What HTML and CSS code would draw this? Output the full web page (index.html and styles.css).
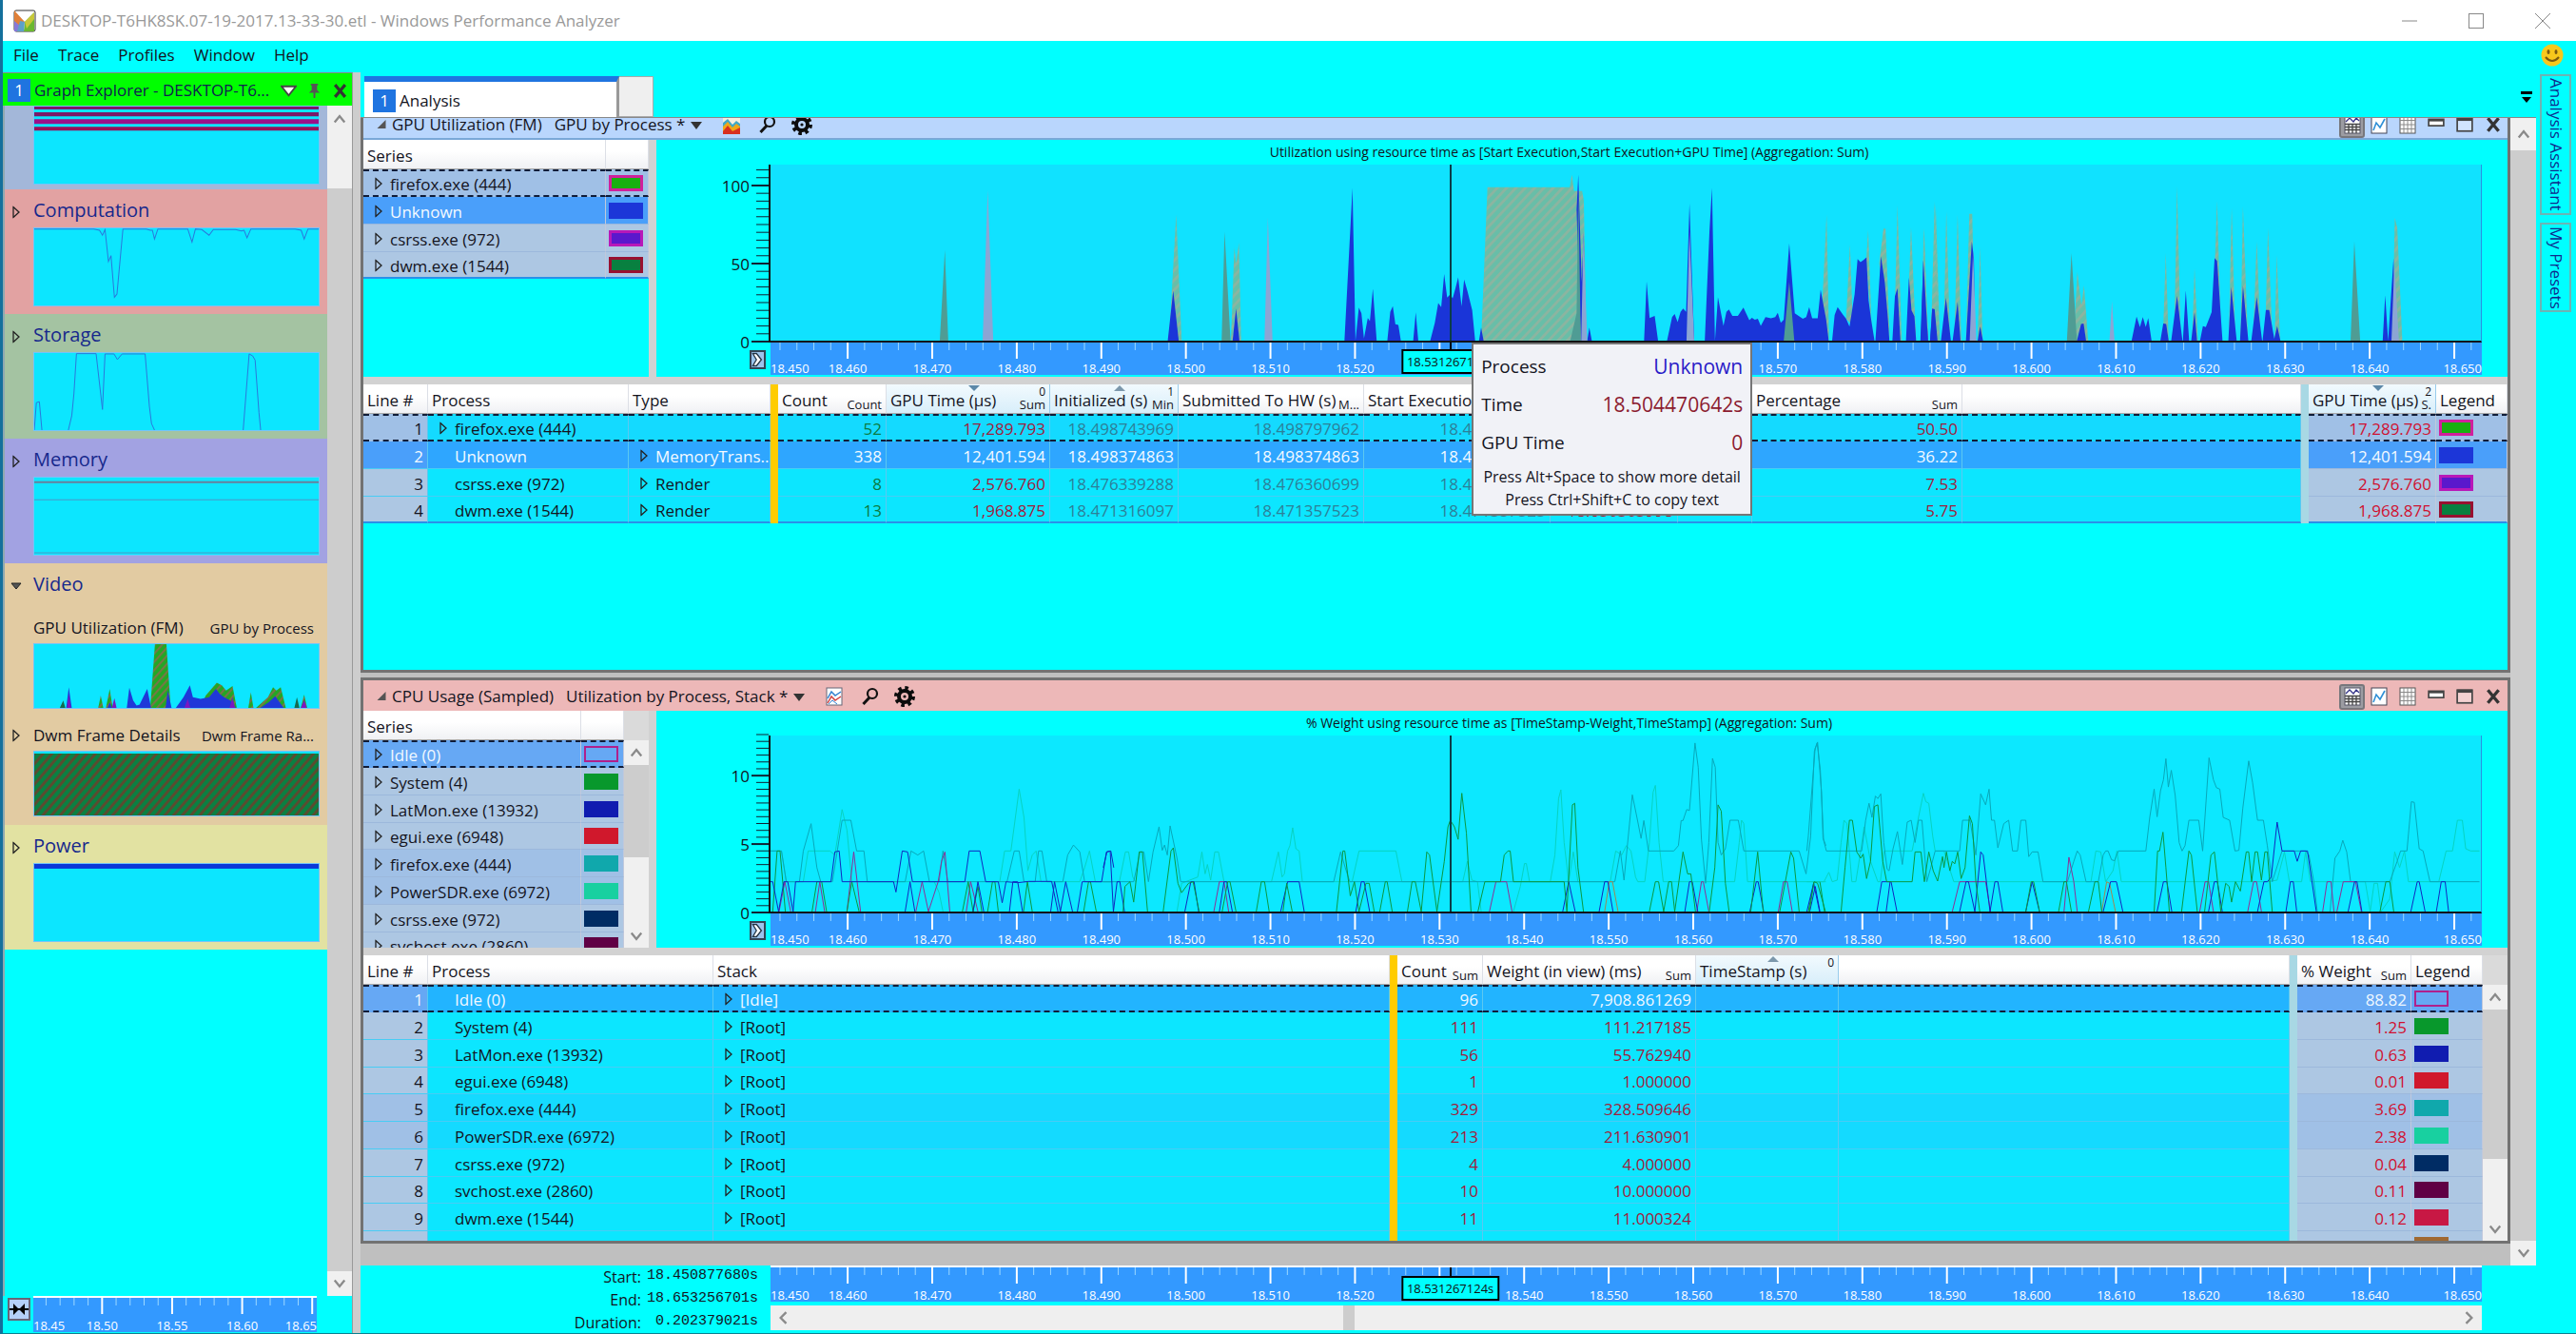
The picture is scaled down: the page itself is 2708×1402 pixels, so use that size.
FILE: index.html
```html
<!DOCTYPE html>
<html lang="en">
<head>
<meta charset="utf-8">
<title>DESKTOP-T6HK8SK.07-19-2017.13-33-30.etl - Windows Performance Analyzer</title>
<link rel="stylesheet" href="styles.css">
</head>
<body>
<svg class="defs" width="0" height="0" aria-hidden="true">
  <defs>
    <pattern id="hatch" width="18" height="18" patternUnits="userSpaceOnUse" patternTransform="rotate(35)"><rect width="18" height="18" fill="#68bea8"/><rect width="7" height="18" fill="#8cb4a0"/></pattern>
    <pattern id="hatchThumb" width="14" height="14" patternUnits="userSpaceOnUse" patternTransform="rotate(35)"><rect width="14" height="14" fill="#24a624"/><rect width="5" height="14" fill="#7a7448"/></pattern>
    <pattern id="hatchDwm" width="7" height="7" patternUnits="userSpaceOnUse" patternTransform="rotate(40)"><rect width="7" height="7" fill="#0a8042"/><rect width="3" height="7" fill="#5a4c30"/></pattern>
    <symbol id="tri" viewBox="0 0 8 13"><path d="M1 1V12L7 6.500Z" fill="none" stroke="#222" stroke-width="1.300"/></symbol>
    <symbol id="up" viewBox="0 0 12 12"><path d="M1.500 9L6 3.500 10.500 9" fill="none" stroke="#8a8a8a" stroke-width="2"/></symbol>
    <symbol id="down" viewBox="0 0 12 12"><path d="M1.500 3L6 8.500 10.500 3" fill="none" stroke="#8a8a8a" stroke-width="2"/></symbol>
    <symbol id="close" viewBox="0 0 16 16"><path d="M3 2L13 14M13 2L3 14" stroke="#333" stroke-width="3"/></symbol>
    <symbol id="find" viewBox="0 0 18 20"><circle cx="11" cy="7" r="5" fill="none" stroke="#111" stroke-width="2.200"/><path d="M8 11L1.500 18" stroke="#111" stroke-width="3"/></symbol>
    <symbol id="gear" viewBox="0 0 22 22"><circle cx="11" cy="11" r="6" fill="none" stroke="#0c0c0c" stroke-width="4"/><circle cx="11" cy="11" r="9" fill="none" stroke="#0c0c0c" stroke-width="4" stroke-dasharray="3.500 3.570"/><circle cx="11" cy="11" r="1.600" fill="#0c0c0c"/></symbol>
    <symbol id="both" viewBox="0 0 18 20"><rect x="1" y="1" width="16" height="18" fill="#fff" stroke="#556"/><path d="M2 7L6 3 10 7 13 3 16 6" fill="none" stroke="#338" stroke-width="1.300"/><path d="M1 9.500H17M1 12.500H17M1 15.500H17M5 9V19M9 9V19M13 9V19" stroke="#444" stroke-width="1.300"/></symbol>
    <symbol id="line" viewBox="0 0 18 20"><rect x="1" y="1" width="16" height="18" fill="#fff" stroke="#445"/><path d="M3 16L6 8 10 13 15 4" fill="none" stroke="#2e8fd6" stroke-width="1.600"/></symbol>
    <symbol id="grid" viewBox="0 0 18 20"><rect x="1" y="1" width="16" height="18" fill="#fff" stroke="#555"/><path d="M1 5.500H17M1 10H17M1 14.500H17M5 1V19M9 1V19M13 1V19" stroke="#8a8a8a"/></symbol>
    <symbol id="min" viewBox="0 0 16 16"><rect x="1" y="3" width="14" height="6" fill="#fff" stroke="#444" stroke-width="1.500"/><path d="M1 4H15" stroke="#444" stroke-width="2"/></symbol>
    <symbol id="max" viewBox="0 0 16 16"><rect x="1" y="2" width="14" height="12" fill="#fff" fill-opacity=".35" stroke="#444" stroke-width="1.500"/><path d="M1 3H15" stroke="#444" stroke-width="3"/></symbol>
    <symbol id="chev" viewBox="0 0 10 12"><path d="M1 1H4L8 6 4 11H1L4 6Z" fill="#fff" stroke="#234" stroke-width="1"/></symbol>
  </defs>
</svg>

<header class="titlebar">
  <svg class="app-icon" viewBox="0 0 24 24"><rect x="1" y="1" width="22" height="22" rx="2" fill="#fff" stroke="#333"/><path d="M1 4L7 10 12 23H1Z" fill="#8878d8"/><path d="M1 1L12 13 8 18 1 12Z" fill="#e08038"/><path d="M12 13L22 3V23H11Z" fill="#6cb830"/><path d="M12 13L22 3V10L14 20Z" fill="#c8c838"/><path d="M7 12L12 13 11 23H4Z" fill="#5ca0c8"/></svg>
  <h1>DESKTOP-T6HK8SK.07-19-2017.13-33-30.etl - Windows Performance Analyzer</h1>
  <div class="window-buttons">
    <button aria-label="Minimize"><svg viewBox="0 0 16 16"><path d="M0 8H16" stroke="#888"/></svg></button>
    <button aria-label="Maximize"><svg viewBox="0 0 16 16"><rect x=".5" y=".5" width="15" height="15" fill="none" stroke="#888"/></svg></button>
    <button aria-label="Close"><svg viewBox="0 0 16 16"><path d="M0 0L16 16M16 0L0 16" stroke="#888"/></svg></button>
  </div>
</header>

<nav class="menubar">
  <button>File</button><button>Trace</button><button>Profiles</button><button>Window</button><button>Help</button>
  <svg class="smiley" viewBox="0 0 24 24"><circle cx="12" cy="12" r="11.500" fill="#f8c81c"/><ellipse cx="8" cy="8.500" rx="1.500" ry="2.500" fill="#7a5a10"/><ellipse cx="16" cy="8.500" rx="1.500" ry="2.500" fill="#7a5a10"/><path d="M5 14Q12 22 19 14" fill="none" stroke="#7a5a10" stroke-width="2"/></svg>
</nav>

<div class="shell">
  <aside class="explorer">
    <div class="explorer-head">
      <span class="badge">1</span><h2>Graph Explorer - DESKTOP-T6...</h2>
      <button aria-label="Menu"><svg viewBox="0 0 18 16"><path d="M1 3H17L9 13Z" fill="#fff" stroke="#444" stroke-width="2"/></svg></button>
      <button aria-label="Pin"><svg viewBox="0 0 16 18"><path d="M4 1H12V3H11V8L14 11H9V17H7V11H2L5 8V3H4Z" fill="#555"/></svg></button>
      <button aria-label="Close"><svg viewBox="0 0 16 16"><use href="#close"/></svg></button>
    </div>
    <div class="explorer-body">
      <div class="sections">
        <section class="sec sec-system">
          <svg class="thumb" viewBox="0 0 298 80" preserveAspectRatio="none"><rect y="26" width="298" height="54" fill="#0ce6ff"/><path d="M0 0H298V3H0ZM0 6H298V10H0Z" fill="#7a1a68"/><path d="M0 13H298V18H0Z" fill="#9b1188"/><path d="M0 21H298V25H0Z" fill="#981058"/></svg>
        </section>
        <section class="sec sec-computation">
          <h3><button class="tw" aria-label="Expand"><svg viewBox="0 0 8 13"><use href="#tri"/></svg></button>Computation</h3>
          <svg class="thumb" viewBox="80 716 667 246" preserveAspectRatio="none"><path class="tl" d="M80 718H220L233 722 240 738 246 720 254 822 260 803 268 936 274 926 288 718H343L352 722 357 722 362 750 370 718H440L450 760 458 718 473 720 490 738 500 720 552 720 566 724 572 722 579 746 588 718H692L706 722 713 750 722 718H747"/></svg>
        </section>
        <section class="sec sec-storage">
          <h3><button class="tw" aria-label="Expand"><svg viewBox="0 0 8 13"><use href="#tri"/></svg></button>Storage</h3>
          <svg class="thumb" viewBox="80 1109 667 247" preserveAspectRatio="none"><path class="tl" d="M80 1356L85 1268 92 1265 98 1356M160 1356L168 1310 173 1240 179 1111H225L240 1290 246 1112H267L275 1130 286 1112H340L350 1280 355 1335 362 1356M570 1356L584 1112 592 1118 598 1132 607 1300 611 1356"/></svg>
        </section>
        <section class="sec sec-memory">
          <h3><button class="tw" aria-label="Expand"><svg viewBox="0 0 8 13"><use href="#tri"/></svg></button>Memory</h3>
          <svg class="thumb" viewBox="0 0 298 84" preserveAspectRatio="none"><path d="M0 5H298" stroke="#68809c" stroke-width="2"/><path d="M0 24H298M0 82H298" stroke="#4898c8" stroke-width="1"/></svg>
        </section>
        <section class="sec sec-video">
          <h3><button class="tw" aria-label="Collapse"><svg class="wide" viewBox="0 0 12 8"><path d="M1 1H11L6 7Z" fill="#555" stroke="#222"/></svg></button>Video</h3>
          <div class="graph-name"><span>GPU Utilization (FM)</span><span class="preset-name">GPU by Process</span></div>
          <svg class="thumb short" viewBox="80 607 667 190" preserveAspectRatio="none">
            <path fill="url(#hatchThumb)" d="M352 797L363 607H390L400 797ZM248 797L257 740 264 797ZM470 797L482 760 508 722 520 730 530 745 545 732 555 797ZM582 797L588 750 594 797ZM600 797L615 780 628 765 640 735 648 745 658 735 670 797ZM705 797L713 757 720 797ZM230 797L236 760 242 797Z"/>
            <path fill="#146b50" d="M140 797L148 775 153 797ZM690 797L696 765 702 797Z"/>
            <path fill="#1f38d8" d="M155 797L161 735 168 797ZM297 797L303 737 312 775 320 790 327 787 345 740 354 797ZM388 797L393 745 402 797ZM412 797L430 765 445 730 452 765 470 770 490 765 506 740 515 755 525 765 540 775 553 797ZM610 797L630 780 645 762 665 797ZM252 797L257 780 262 797Z"/>
            <path fill="#7a18c0" d="M157 797L161 755 166 797ZM262 797L268 768 273 797ZM432 797L440 770 446 797ZM538 797L545 765 551 797ZM705 797L713 772 719 797Z"/>
          </svg>
          <div class="graph-name"><button class="tw" aria-label="Expand"><svg viewBox="0 0 8 13"><use href="#tri"/></svg></button><span>Dwm Frame Details</span><span class="preset-name">Dwm Frame Ra...</span></div>
          <svg class="thumb short" viewBox="0 0 298 68" preserveAspectRatio="none"><rect y="2" width="298" height="66" fill="url(#hatchDwm)"/></svg>
        </section>
        <section class="sec sec-power">
          <h3><button class="tw" aria-label="Expand"><svg viewBox="0 0 8 13"><use href="#tri"/></svg></button>Power</h3>
          <svg class="thumb" viewBox="0 0 298 82" preserveAspectRatio="none"><rect width="298" height="5" fill="#0c38d8"/></svg>
        </section>
      </div>
      <div class="scroll"><button class="thumb-up tall" aria-label="Scroll up"><svg viewBox="0 0 12 12"><use href="#up"/></svg></button><button aria-label="Scroll down"><svg viewBox="0 0 12 12"><use href="#down"/></svg></button></div>
    </div>
    <div class="explorer-foot">
      <button class="fit" aria-label="Fit"><svg viewBox="0 0 20 18"><path d="M0 9H20" stroke="#000" stroke-width="2"/><path d="M4 3L10 9 4 15ZM16 3L10 9 16 15Z" fill="#000"/></svg></button>
      <div class="ruler framed" data-step="0.05" data-minor="0.01" data-digits="2"></div>
    </div>
  </aside>
  <div class="main-split"></div>

  <main class="workspace">
    <div class="tabs">
      <button class="tab"><span class="badge">1</span>Analysis</button><button class="tab-new" aria-label="New tab"></button>
      <button class="tab-menu" aria-label="Tab list"><svg viewBox="0 0 12 12"><path d="M0 1.500H12" stroke="#000" stroke-width="3"/><path d="M1 6H11L6 12Z"/></svg></button>
    </div>
    <div class="work">
      <div class="panels">

        <section class="panel panel-gpu">
          <header class="panel-head">
            <svg class="corner" viewBox="0 0 10 10"><path d="M9 0V9H0Z" fill="#555"/></svg>
            <h2>GPU Utilization (FM)</h2>
            <button class="preset">GPU by Process * <svg viewBox="0 0 12 9"><path d="M0 1H12L6 9Z" fill="#333"/></svg></button>
            <button class="tool" aria-label="Graph type"><svg viewBox="0 0 18 20"><rect width="18" height="20" fill="#f4f0e0"/><path d="M0 8L5 4 10 10 14 6 18 9V20H0Z" fill="#3fa8c8"/><path d="M0 12L5 7 10 13 14 9 18 12V20H0Z" fill="#f0a818"/><path d="M0 17L5 11 10 17 18 13V20H0Z" fill="#d83020"/></svg></button>
            <button class="tool" aria-label="Search"><svg viewBox="0 0 18 20"><use href="#find"/></svg></button>
            <button class="tool gear" aria-label="Settings"><svg viewBox="0 0 22 22"><use href="#gear"/></svg></button>
            <span class="spacer"></span>
            <button class="view on" aria-label="Graph and table"><svg viewBox="0 0 18 20"><use href="#both"/></svg></button><button class="view" aria-label="Graph only"><svg viewBox="0 0 18 20"><use href="#line"/></svg></button><button class="view" aria-label="Table only"><svg viewBox="0 0 18 20"><use href="#grid"/></svg></button><button class="view" aria-label="Minimize"><svg viewBox="0 0 16 16"><use href="#min"/></svg></button><button class="view" aria-label="Maximize"><svg viewBox="0 0 16 16"><use href="#max"/></svg></button><button class="view" aria-label="Close"><svg viewBox="0 0 16 16"><use href="#close"/></svg></button>
          </header>
          <div class="chart-area">
            <div class="series">
              <table class="grid side">
                <colgroup><col><col class="w45"></colgroup>
                <thead><tr><th>Series</th><th></th></tr></thead>
                <tbody>
                  <tr class="focus hot"><td><svg class="exp" viewBox="0 0 8 13"><use href="#tri"/></svg>firefox.exe (444)</td><td><i class="sw c-ff"></i></td></tr>
                  <tr class="sel"><td><svg class="exp" viewBox="0 0 8 13"><use href="#tri"/></svg>Unknown</td><td><i class="sw c-unk"></i></td></tr>
                  <tr><td><svg class="exp" viewBox="0 0 8 13"><use href="#tri"/></svg>csrss.exe (972)</td><td><i class="sw c-csr"></i></td></tr>
                  <tr class="last"><td><svg class="exp" viewBox="0 0 8 13"><use href="#tri"/></svg>dwm.exe (1544)</td><td><i class="sw c-dwm"></i></td></tr>
                </tbody>
              </table>
            </div>
            <div class="v-split"></div>
            <div class="chart">
              <div class="chart-title">Utilization using resource time as [Start Execution,Start Execution+GPU Time] (Aggregation: Sum)</div>
              <div class="axis" data-max="114" data-minor="5" data-major="50"></div>
              <div class="plot gpu">
                <svg viewBox="0 0 1799 187" preserveAspectRatio="none">
                  <g transform="translate(-130 -62) scale(.44643 .33333)">
                    <path class="tealf" d="M690 748L702 458 710 748ZM1354 748L1361 400 1375 748Z"/>
                    <path class="pinkf" d="M791 748L803 268 816 748ZM1455 748L1463 355 1474 748Z"/>
                    <path class="hatchf" d="M1230 748L1247 345 1260 748ZM1376 748L1384 450 1388 500 1395 435 1400 748Z"/>
                    <path class="bluef" d="M1227 748L1240 588 1253 748ZM1380 748L1388 645 1396 748Z"/>
                  </g>
                  <g transform="translate(530 -62) scale(.44643 .33333)">
                    <path class="hatchf" d="M487 748L502 258H696L701 218 706 270H725L729 300 735 748ZM1290 650L1301 345 1307 748ZM1347 677L1356 440 1363 700ZM1394 500L1399 395 1407 700ZM1425 500L1435 390H1440L1450 748ZM1460 748L1468 315 1478 748ZM1490 748L1500 385 1512 748ZM1524 748L1530 390 1541 748ZM1548 748L1558 310 1568 748Z"/>
                    <path class="bluef" d="M165 748L184 260 191 748 199 642 205 660 211 740 220 675 225 685 232 582 241 748ZM266 748L273 655 279 637 285 695 292 697 298 748ZM327 748L333 657 339 748ZM367 748L378 690 386 627 393 640 400 535 407 610 414 600 420 612 427 578 433 545 441 638 447 552 455 590 466 650 473 748ZM482 748L487 705 493 748ZM712 330L716 218 724 560 729 400 731 748 722 748ZM737 748L742 705 748 748ZM871 748L877 558 884 675 896 668 904 748ZM925 748L937 672 943 662 950 688 957 655 963 645 970 655 978 310 989 748ZM1014 748L1025 400 1031 260 1038 748 1045 608 1058 700 1065 655 1071 648 1079 668H1092L1105 642 1119 682 1125 674 1132 680 1139 677 1146 700 1157 672 1170 676 1180 672 1186 658 1193 690 1200 680 1213 438 1226 660 1245 677 1253 672 1260 640 1267 676H1280L1287 585 1300 680 1306 748ZM1314 748L1320 665 1327 640 1340 665 1347 677 1355 702 1367 600 1374 487 1381 497 1388 490 1395 482 1400 620 1406 680 1414 748ZM1416 748L1429 478 1438 560 1445 670 1449 748ZM1456 748L1462 605 1468 580 1475 748ZM1488 748L1495 545 1501 650 1508 670 1512 748ZM1522 748L1529 490 1540 748ZM1545 748L1550 645 1556 650 1562 748Z"/>
                    <path class="tealf" d="M697 748L712 660 716 270 722 748ZM1200 748L1213 560 1225 748Z"/>
                    <path class="pinkf" d="M723 748L728 400 737 748ZM971 748L978 400 989 748Z"/>
                  </g>
                  <g transform="translate(1210 -172) scale(.43878 .35714)">
                    <path class="hatchf" d="M2 1006L8 670 16 1006ZM24 1006L33 590 42 1006ZM54 1006L61 620 70 1006ZM80 1006L88 630 97 1006ZM108 1006L116 628H123L130 1006ZM136 1006L142 725 148 1006ZM366 1006L375 800 385 900 391 840 401 1006ZM580 1006L587 745 594 1006ZM607 1006L614 545 623 1006ZM650 1006L656 790 664 1006ZM698 1006L710 590 720 1006ZM738 1006L745 610 754 1006ZM766 1006L772 605 784 1006ZM796 1006L805 710 815 1006ZM825 1006L832 670 843 1006ZM848 1006L853 750 861 1006ZM1130 1006L1136 640 1142 670 1154 1006Z"/>
                    <path class="tealf" d="M350 1006L361 745 374 1006ZM1030 1006L1039 710 1053 1006Z"/>
                    <path class="bluef" d="M0 1006L6 768 17 1006ZM22 1006L27 910 33 912 40 1006ZM48 1006L60 878 72 1006ZM76 1006L88 890 95 1006ZM108 1006L122 710 127 760 130 1006ZM136 1006L142 963 149 1006ZM374 1006L384 956 390 954 396 1006ZM505 1006L517 934 525 965 532 935 539 965 545 938 553 1006ZM574 1006L581 954 588 956 594 1006ZM600 1006L614 872 627 1006ZM628 1006L635 856 643 1006ZM648 1006L656 920 662 1006ZM669 1006L676 962 683 965 697 920 704 760 710 768 723 1006ZM737 1006L744 846 757 1006ZM765 1006L772 842 785 1006ZM792 1006L805 876 818 1006ZM819 1006L827 914H835L848 1006ZM846 1006L854 962 862 1006ZM1107 1006L1113 870 1120 1006 1133 760 1137 1006Z"/>
                    <path class="pinkf" d="M117 1006L125 740 133 1006ZM452 1006L458 888 464 1006ZM1128 1006L1135 780 1146 1006Z"/>
                  </g>
                </svg>
                <div class="cursor"></div>
                <div class="tooltip" role="tooltip">
                  <dl><dt>Process</dt><dd class="t-blue">Unknown</dd><dt>Time</dt><dd>18.504470642s</dd><dt>GPU Time</dt><dd>0</dd></dl>
                  <p>Press Alt+Space to show more detail</p><p>Press Ctrl+Shift+C to copy text</p>
                </div>
              </div>
              <button class="chevron" aria-label="Expand axis"><svg viewBox="0 0 10 12"><use href="#chev"/></svg></button>
              <div class="ruler" data-step="0.01" data-minor="0.002" data-digits="3" data-cursor="1"></div>
            </div>
          </div>
          <div class="h-split"></div>
          <div class="table-area">
            <table class="grid gpu-table">
              <colgroup><col class="w68"><col class="w211"><col class="w149"><col class="w8"><col class="w114"><col class="w172"><col class="w135"><col class="w195"><col class="w196"><col class="w134"><col class="w78"><col class="w221"><col><col class="w8"><col class="w134"><col class="w75"></colgroup>
              <thead><tr><th>Line #</th><th>Process</th><th>Type</th><th class="gold"></th><th><div>Count<sub>Count</sub></div></th><th class="sort desc"><div>GPU Time (µs)<sub>Sum</sub><sup>0</sup></div></th><th class="sort asc"><div>Initialized (s)<sub>Min</sub><sup>1</sup></div></th><th><div>Submitted To HW (s)<sub>M...</sub></div></th><th><div>Start Execution (s)<sub>Min</sub></div></th><th></th><th></th><th><div>Percentage<sub>Sum</sub></div></th><th></th><th class="freeze"></th><th class="sort desc"><div>GPU Time (µs)<sub>S.</sub><sup>2</sup></div></th><th>Legend</th></tr></thead>
              <tbody>
                <tr class="focus hot"><td class="n">1</td><td><svg class="exp" viewBox="0 0 8 13"><use href="#tri"/></svg>firefox.exe (444)</td><td></td><td class="gold"></td><td class="num g">52</td><td class="num r">17,289.793</td><td class="num s">18.498743969</td><td class="num s">18.498797962</td><td class="num s">18.498797962</td><td></td><td></td><td class="num r">50.50</td><td></td><td class="freeze"></td><td class="num k">17,289.793</td><td class="k"><i class="sw c-ff"></i></td></tr>
                <tr class="sel"><td class="n">2</td><td class="leaf">Unknown</td><td><svg class="exp" viewBox="0 0 8 13"><use href="#tri"/></svg>MemoryTrans...</td><td class="gold"></td><td class="num g">338</td><td class="num r">12,401.594</td><td class="num s">18.498374863</td><td class="num s">18.498374863</td><td class="num s">18.498374863</td><td></td><td></td><td class="num r">36.22</td><td></td><td class="freeze"></td><td class="num k">12,401.594</td><td class="k"><i class="sw c-unk"></i></td></tr>
                <tr><td class="n">3</td><td class="leaf">csrss.exe (972)</td><td><svg class="exp" viewBox="0 0 8 13"><use href="#tri"/></svg>Render</td><td class="gold"></td><td class="num g">8</td><td class="num r">2,576.760</td><td class="num s">18.476339288</td><td class="num s">18.476360699</td><td class="num s">18.476360699</td><td></td><td></td><td class="num r">7.53</td><td></td><td class="freeze"></td><td class="num k">2,576.760</td><td class="k"><i class="sw c-csr"></i></td></tr>
                <tr class="last"><td class="n">4</td><td class="leaf">dwm.exe (1544)</td><td><svg class="exp" viewBox="0 0 8 13"><use href="#tri"/></svg>Render</td><td class="gold"></td><td class="num g">13</td><td class="num r">1,968.875</td><td class="num s">18.471316097</td><td class="num s">18.471357523</td><td class="num s">18.471357523</td><td class="num r">18.650303998</td><td></td><td class="num r">5.75</td><td></td><td class="freeze"></td><td class="num k">1,968.875</td><td class="k"><i class="sw c-dwm"></i></td></tr>
              </tbody>
            </table>
          </div>
        </section>

        <section class="panel panel-cpu">
          <header class="panel-head">
            <svg class="corner" viewBox="0 0 10 10"><path d="M9 0V9H0Z" fill="#555"/></svg>
            <h2>CPU Usage (Sampled)</h2>
            <button class="preset">Utilization by Process, Stack * <svg viewBox="0 0 12 9"><path d="M0 1H12L6 9Z" fill="#333"/></svg></button>
            <button class="tool" aria-label="Graph type"><svg viewBox="0 0 18 20"><rect x="1" y="1" width="16" height="18" fill="#fff" stroke="#667"/><path d="M2 12L6 5 10 9 16 5" fill="none" stroke="#3080d0" stroke-width="1.500"/><path d="M2 17L6 10 10 14 16 10" fill="none" stroke="#d04040" stroke-width="1.500"/><path d="M3 18L7 14 12 18" fill="none" stroke="#3080d0"/></svg></button>
            <button class="tool" aria-label="Search"><svg viewBox="0 0 18 20"><use href="#find"/></svg></button>
            <button class="tool gear" aria-label="Settings"><svg viewBox="0 0 22 22"><use href="#gear"/></svg></button>
            <span class="spacer"></span>
            <button class="view on" aria-label="Graph and table"><svg viewBox="0 0 18 20"><use href="#both"/></svg></button><button class="view" aria-label="Graph only"><svg viewBox="0 0 18 20"><use href="#line"/></svg></button><button class="view" aria-label="Table only"><svg viewBox="0 0 18 20"><use href="#grid"/></svg></button><button class="view" aria-label="Minimize"><svg viewBox="0 0 16 16"><use href="#min"/></svg></button><button class="view" aria-label="Maximize"><svg viewBox="0 0 16 16"><use href="#max"/></svg></button><button class="view" aria-label="Close"><svg viewBox="0 0 16 16"><use href="#close"/></svg></button>
          </header>
          <div class="chart-area">
            <div class="series">
              <table class="grid side">
                <colgroup><col><col class="w45"></colgroup>
                <thead><tr><th>Series</th><th></th></tr></thead>
                <tbody>
                  <tr class="focus idle"><td><svg class="exp" viewBox="0 0 8 13"><use href="#tri"/></svg>Idle (0)</td><td><i class="sw c-idle"></i></td></tr>
                  <tr><td><svg class="exp" viewBox="0 0 8 13"><use href="#tri"/></svg>System (4)</td><td><i class="sw c-sys"></i></td></tr>
                  <tr><td><svg class="exp" viewBox="0 0 8 13"><use href="#tri"/></svg>LatMon.exe (13932)</td><td><i class="sw c-lat"></i></td></tr>
                  <tr><td><svg class="exp" viewBox="0 0 8 13"><use href="#tri"/></svg>egui.exe (6948)</td><td><i class="sw c-egui"></i></td></tr>
                  <tr class="hot"><td><svg class="exp" viewBox="0 0 8 13"><use href="#tri"/></svg>firefox.exe (444)</td><td><i class="sw c-teal"></i></td></tr>
                  <tr class="hot"><td><svg class="exp" viewBox="0 0 8 13"><use href="#tri"/></svg>PowerSDR.exe (6972)</td><td><i class="sw c-mint"></i></td></tr>
                  <tr><td><svg class="exp" viewBox="0 0 8 13"><use href="#tri"/></svg>csrss.exe (972)</td><td><i class="sw c-navy"></i></td></tr>
                  <tr><td><svg class="exp" viewBox="0 0 8 13"><use href="#tri"/></svg>svchost.exe (2860)</td><td><i class="sw c-plum"></i></td></tr>
                </tbody>
              </table>
              <div class="scroll"><span class="gap"></span><button aria-label="Scroll up"><svg viewBox="0 0 12 12"><use href="#up"/></svg></button><button class="thumb-down mid" aria-label="Scroll down"><svg viewBox="0 0 12 12"><use href="#down"/></svg></button></div>
            </div>
            <div class="v-split"></div>
            <div class="chart">
              <div class="chart-title">% Weight using resource time as [TimeStamp-Weight,TimeStamp] (Aggregation: Sum)</div>
              <div class="axis" data-max="13" data-minor="0.5" data-major="5"></div>
              <div class="plot cpu">
                <svg viewBox="0 0 1799 187" preserveAspectRatio="none">
                  <g transform="translate(-440 -73) scale(.5102 .33333)">
                    <path class="l-mint" d="M862 587H885L895 685H930L940 587H985L995 600 1010 455 1020 520 1030 685H1200L1210 720 1218 780M1320 685H1335L1345 587H1358L1375 390 1385 480 1393 650 1402 600 1410 587 1420 685H1500L1510 640 1520 587 1532 685H1568"/>
                    <path class="l-teal" d="M862 587H885L895 685H922L930 587 946 500 958 640 966 685H990L1010 489H1028L1040 587H1055L1062 685H1140L1152 587 1166 600 1178 587 1190 685H1210L1218 587 1228 685H1350L1365 587H1375L1385 685H1408L1415 587H1422L1432 685H1465L1475 600 1487 568 1500 590 1510 685H1568"/>
                    <path class="l-mag" d="M880 780L892 685 904 780M955 780L964 685 974 780M1020 780L1034 590 1048 780M1162 780L1175 685 1188 780 1208 685 1215 620 1222 590 1232 780M1266 780L1275 685 1290 780"/>
                    <path class="l-green" d="M867 780L876 587H882L893 780M948 780L958 685H968L978 780M1020 780L1030 685 1045 780M1258 780L1270 685 1280 780 1290 700 1298 780M1310 780L1320 685H1325L1332 780M1384 780L1392 685 1402 780M1508 780L1518 685H1522L1534 780"/>
                    <path class="l-blue" d="M862 685H867L879 780 890 685H898L909 780 914 685H987L995 590 1004 587 1010 685H1116L1121 718 1134 587 1145 590 1155 685H1263L1272 587H1294L1306 685H1332L1340 752 1348 685 1372 688 1395 684H1442L1455 780M1140 780L1150 685 1160 780M1280 780L1290 685 1302 780M1355 780L1362 685H1372L1382 780M1440 780L1448 685 1460 780 1471 685 1485 780M1495 780L1505 685H1545L1555 590 1564 587 1570 640"/>
                  </g>
                  <g transform="translate(350 -73) scale(.48473 .33333)">
                    <path class="l-mint" d="M35 685L48 590H55L64 670 70 685M160 780L170 690 205 670 214 590 221 660 226 630 233 680 242 590H250L262 685H365L380 590 388 670 393 660 400 587 405 570 411 513 418 580 425 587 432 685H540L555 587H635L648 685H780L790 620 800 680 812 685 820 780M890 780L905 700 914 627H918L925 685H970L980 600 988 420 993 392 1000 560 1010 685 1020 590 1030 685H1100L1112 587 1125 600 1135 570 1145 587 1155 670 1160 685H1175L1185 560 1193 400 1198 378 1206 560 1215 685H1370L1380 560 1385 489 1390 500 1398 685H1568"/>
                    <path class="l-teal" d="M0 685H66L80 590H88L98 685 108 590 121 510 128 585 133 568 139 600 145 507 160 610 168 685H500L515 590 525 640 535 685H1110L1122 587 1130 680 1148 408 1158 480 1167 547 1173 490 1183 587H1238L1248 570 1254 490H1258L1266 455 1272 458 1284 243 1291 320 1298 550 1307 690 1314 560 1322 292 1328 320 1334 560 1341 600 1350 580 1360 489H1378L1390 587H1510L1525 660 1535 540 1543 270 1549 243 1556 330 1563 550 1568 570"/>
                    <path class="l-org" d="M1088 780L1098 685H1105L1117 780"/>
                    <path class="l-mag" d="M240 780L252 685H262L272 780M838 780L852 685H875L887 780M1288 780L1298 685H1302L1314 780M1465 780L1476 685H1484L1495 780"/>
                    <path class="l-blue" d="M0 640L8 590 15 587 22 780 30 685H36L46 780M177 780L190 685H197L207 780M252 780L262 685H268L280 780M385 780L400 685H425L436 780M548 780L560 685H566L578 780M997 780L1010 685 1024 780M1076 780L1088 685H1095L1106 780M1262 780L1272 685H1278L1290 780M1403 780L1417 685H1421L1433 780M1533 780L1545 700 1555 780"/>
                    <path class="l-green" d="M43 780L47 700 58 685 66 750 78 590H85L96 780M130 780L147 587 152 577 162 690 170 720 185 690 195 685 208 780M258 780L270 685H275L288 780M332 780L343 685H350L360 780M390 780L398 690 410 780M506 780L520 587H524L536 730 545 685 555 780 570 690H577L588 780M600 780L612 685H616L627 780M660 780L670 685H677L690 780 702 590 708 600 724 780 740 620 748 510 753 489 762 510 770 550 778 403 788 530 798 780M813 780L828 685H862L870 600 878 587H883L890 685H1000L1006 780 1018 440 1023 435 1030 640 1042 780M1185 780L1198 685H1205L1216 780 1227 685H1233L1240 780 1258 590 1268 660H1275L1285 780M1315 780L1327 640 1334 440 1341 460 1350 690 1358 780M1405 780L1420 590 1432 780M1468 780L1492 590 1498 610 1510 780M1530 780L1542 685H1555L1565 780"/>
                  </g>
                  <g transform="translate(1090 -73) scale(.5153 .33333)">
                    <path class="l-mint" d="M0 685H35L45 655 52 685 62 680 70 560 76 489 82 500 92 685H100L110 587 117 510 130 620 145 685H150L158 587H215L228 480 238 403 243 430 249 435 257 540 262 587H280L300 685H580L590 587 600 590 610 685 625 650 633 587 642 685H940L960 680 975 590 985 685H1010L1018 590 1028 685H1140L1150 780 1158 690H1165L1172 780 1190 740 1200 590 1210 640 1220 587 1228 685H1290L1305 587H1318L1328 489H1338L1345 580 1355 587H1373"/>
                    <path class="l-teal" d="M0 587L3 540 17 260 22 240 30 400 33 545 40 587H112L120 490 127 435 133 480 140 412 145 420 151 405 157 560 164 645 168 650 176 580 185 525 195 630 205 495 213 489 221 560 228 489H235L245 685 253 640 262 587H312L318 489H333L345 600 355 405 365 440 372 390 377 489H383L390 577 402 500 412 489 420 587H430L437 489H447L453 605 460 590H472L482 685H532L545 620 552 587 558 600 570 685H595L605 600 610 587H615L622 615 628 618 636 587H692L700 480 709 390 715 478 722 395 728 360 733 293 738 383 744 330 752 410 760 560 766 587 772 570 780 489H800L808 587 821 290 830 360 836 385 843 390 850 480 863 489 874 587 882 585 890 450 902 300 910 370 920 489H932L940 570 950 685 970 587H1018L1025 600 1035 685 1042 780M1068 780L1078 610 1088 587 1094 553 1102 590 1110 685H1190L1205 620 1212 587H1225L1234 430 1240 432 1250 580 1258 587 1272 685H1373"/>
                    <path class="l-org" d="M602 780L612 685 618 690 630 780"/>
                    <path class="l-mag" d="M297 780L312 685H365L375 780M525 780L535 607 545 685 552 780M802 780L813 685H820L830 780M900 780L912 685H918L928 780M1053 780L1062 685H1070L1076 780M1082 780L1095 685H1120L1132 780"/>
                    <path class="l-blue" d="M0 780L14 690 26 780M143 780L153 685H172L184 780M162 780L170 685M312 780L325 685H330L343 780 355 590 360 600 374 780 384 685H390L400 780M447 780L460 685 475 780M605 780L620 685H632L645 780M715 780L728 685H735L745 780M820 780L832 685H838L848 780M920 780L933 685H940L948 670 960 495 970 587H995L1001 620 1008 587H1022L1040 780M978 780L987 685H993L1000 780M1105 780L1118 685H1123L1133 780M1233 780L1246 685H1250L1262 780M1285 780L1295 685H1303L1310 780"/>
                    <path class="l-green" d="M5 780L15 685 22 690 38 780M70 780L78 640 87 489H93L102 590 110 610 115 597 122 675 130 620 138 445 145 440 155 620 163 685H215L221 590H233L240 685 249 590 258 650 267 683 277 605 280 640 285 590 292 650 297 620 302 628 308 590 315 675 323 640 332 475 338 500 345 685 353 780M447 780L458 685H463L475 780M514 780L525 685H530L540 780M575 780L588 685H595L602 780M709 780L716 587H720L727 527 733 640 740 780M765 780L780 587 785 600 797 780M812 780L825 600 832 590 845 780 855 690 862 700 867 750 875 685 885 715 897 590H902L908 685 915 590H920L928 680 935 590H940L950 780M1170 780L1182 685H1190L1198 780"/>
                  </g>
                </svg>
                <div class="cursor"></div>
              </div>
              <button class="chevron" aria-label="Expand axis"><svg viewBox="0 0 10 12"><use href="#chev"/></svg></button>
              <div class="ruler" data-step="0.01" data-minor="0.002" data-digits="3"></div>
            </div>
          </div>
          <div class="h-split"></div>
          <div class="table-area">
            <table class="grid cpu-table">
              <colgroup><col class="w68"><col class="w300"><col class="w711"><col class="w8"><col class="w90"><col class="w224"><col class="w150"><col><col class="w8"><col class="w120"><col class="w75"></colgroup>
              <thead><tr><th>Line #</th><th>Process</th><th>Stack</th><th class="gold"></th><th><div>Count<sub>Sum</sub></div></th><th><div>Weight (in view) (ms)<sub>Sum</sub></div></th><th class="sort asc"><div>TimeStamp (s)<sup>0</sup></div></th><th></th><th class="freeze"></th><th><div>% Weight<sub>Sum</sub></div></th><th>Legend</th></tr></thead>
              <tbody>
                <tr class="focus idle"><td class="n">1</td><td class="leaf">Idle (0)</td><td><svg class="exp" viewBox="0 0 8 13"><use href="#tri"/></svg>[Idle]</td><td class="gold"></td><td class="num r">96</td><td class="num r">7,908.861269</td><td></td><td></td><td class="freeze"></td><td class="num k">88.82</td><td class="k"><i class="sw c-idle"></i></td></tr>
                <tr><td class="n">2</td><td class="leaf">System (4)</td><td><svg class="exp" viewBox="0 0 8 13"><use href="#tri"/></svg>[Root]</td><td class="gold"></td><td class="num r">111</td><td class="num r">111.217185</td><td></td><td></td><td class="freeze"></td><td class="num k">1.25</td><td class="k"><i class="sw c-sys"></i></td></tr>
                <tr><td class="n">3</td><td class="leaf">LatMon.exe (13932)</td><td><svg class="exp" viewBox="0 0 8 13"><use href="#tri"/></svg>[Root]</td><td class="gold"></td><td class="num r">56</td><td class="num r">55.762940</td><td></td><td></td><td class="freeze"></td><td class="num k">0.63</td><td class="k"><i class="sw c-lat"></i></td></tr>
                <tr><td class="n">4</td><td class="leaf">egui.exe (6948)</td><td><svg class="exp" viewBox="0 0 8 13"><use href="#tri"/></svg>[Root]</td><td class="gold"></td><td class="num r">1</td><td class="num r">1.000000</td><td></td><td></td><td class="freeze"></td><td class="num k">0.01</td><td class="k"><i class="sw c-egui"></i></td></tr>
                <tr class="hot"><td class="n">5</td><td class="leaf">firefox.exe (444)</td><td><svg class="exp" viewBox="0 0 8 13"><use href="#tri"/></svg>[Root]</td><td class="gold"></td><td class="num r">329</td><td class="num r">328.509646</td><td></td><td></td><td class="freeze"></td><td class="num k">3.69</td><td class="k"><i class="sw c-teal"></i></td></tr>
                <tr class="hot"><td class="n">6</td><td class="leaf">PowerSDR.exe (6972)</td><td><svg class="exp" viewBox="0 0 8 13"><use href="#tri"/></svg>[Root]</td><td class="gold"></td><td class="num r">213</td><td class="num r">211.630901</td><td></td><td></td><td class="freeze"></td><td class="num k">2.38</td><td class="k"><i class="sw c-mint"></i></td></tr>
                <tr><td class="n">7</td><td class="leaf">csrss.exe (972)</td><td><svg class="exp" viewBox="0 0 8 13"><use href="#tri"/></svg>[Root]</td><td class="gold"></td><td class="num r">4</td><td class="num r">4.000000</td><td></td><td></td><td class="freeze"></td><td class="num k">0.04</td><td class="k"><i class="sw c-navy"></i></td></tr>
                <tr><td class="n">8</td><td class="leaf">svchost.exe (2860)</td><td><svg class="exp" viewBox="0 0 8 13"><use href="#tri"/></svg>[Root]</td><td class="gold"></td><td class="num r">10</td><td class="num r">10.000000</td><td></td><td></td><td class="freeze"></td><td class="num k">0.11</td><td class="k"><i class="sw c-plum"></i></td></tr>
                <tr><td class="n">9</td><td class="leaf">dwm.exe (1544)</td><td><svg class="exp" viewBox="0 0 8 13"><use href="#tri"/></svg>[Root]</td><td class="gold"></td><td class="num r">11</td><td class="num r">11.000324</td><td></td><td></td><td class="freeze"></td><td class="num k">0.12</td><td class="k"><i class="sw c-rose"></i></td></tr>
                <tr><td class="n"></td><td></td><td></td><td class="gold"></td><td></td><td></td><td></td><td></td><td class="freeze"></td><td class="k"></td><td class="k"><i class="sw c-rust"></i></td></tr>
              </tbody>
            </table>
            <div class="scroll"><span class="gap"></span><button aria-label="Scroll up"><svg viewBox="0 0 12 12"><use href="#up"/></svg></button><button class="thumb-down" aria-label="Scroll down"><svg viewBox="0 0 12 12"><use href="#down"/></svg></button></div>
          </div>
        </section>
      </div>
      <div class="scroll"><button class="outer-up" aria-label="Scroll up"><svg viewBox="0 0 12 12"><use href="#up"/></svg></button><button aria-label="Scroll down"><svg viewBox="0 0 12 12"><use href="#down"/></svg></button></div>
    </div>
    <footer class="timeline">
      <dl class="range"><dt>Start:</dt><dd>18.450877680s</dd><dt>End:</dt><dd>18.653256701s</dd><dt>Duration:</dt><dd>0.202379021s</dd></dl>
      <div class="time-track">
        <div class="ruler framed" data-step="0.01" data-minor="0.002" data-digits="3" data-cursor="1"></div>
        <div class="h-scroll"><button aria-label="Scroll left"><svg viewBox="0 0 12 12"><path d="M9 1L4 6 9 11" fill="none" stroke="#8a8a8a" stroke-width="2"/></svg></button><i style="width:12px;margin-left:32%"></i><button aria-label="Scroll right"><svg viewBox="0 0 12 12"><path d="M3 1L8 6 3 11" fill="none" stroke="#8a8a8a" stroke-width="2"/></svg></button></div>
      </div>
    </footer>
  </main>

  <nav class="rail"><button>Analysis Assistant</button><button>My Presets</button></nav>
</div>
<script src="charts.js"></script>
</body>
</html>
```
FILE: styles.css
```css
* { box-sizing: border-box; }
body { margin: 0; min-height: 100vh; display: flex; flex-direction: column; background: #0ff; border-left: 3px solid #14709c; border-bottom: 1px solid #0c8090; font: 17px/24px "Open Sans", "Noto Sans", sans-serif; color: #14141e; }
button { font: inherit; color: inherit; background: none; border: 0; padding: 0; margin: 0; }
h1, h2, h3, p, dl, dd { margin: 0; font-weight: 400; font-size: inherit; }
svg { display: block; flex: none; }
.defs { position: absolute; }

.titlebar { height: 43px; background: #fff; display: flex; align-items: center; padding-left: 11px; gap: 5px; color: #999; }
.titlebar h1 { font-size: 17px; }
.app-icon { width: 24px; height: 24px; }
.window-buttons { margin-left: auto; display: flex; }
.window-buttons button { width: 70px; height: 43px; display: flex; align-items: center; justify-content: center; }
.window-buttons svg { width: 16px; height: 16px; }
.menubar { height: 33px; display: flex; align-items: center; gap: 20px; padding: 0 13px 3px 11px; }
.smiley { width: 24px; height: 24px; margin-left: auto; }

.shell { flex: 1; display: flex; }
.badge { width: 24px; height: 24px; background: #1f74e0; color: #fff; text-align: center; line-height: 24px; flex: none; }

/* Graph explorer */
.explorer { flex: 0 0 367px; min-width: 0; display: flex; flex-direction: column; }
.explorer-head { height: 35px; border-top: 1px solid #888; background: #0f0; display: flex; align-items: center; padding: 2px 1px 0 5px; gap: 4px; color: #102050; }
.explorer-head h2 { flex: 1; min-width: 0; white-space: nowrap; overflow: hidden; }
.explorer-head button { width: 23px; flex: none; display: flex; justify-content: center; }
.explorer-head svg { width: 17px; height: 17px; }
.explorer-body { flex: 1; display: flex; }
.sections { flex: 1; min-width: 0; border-left: 2px solid #8fa8b0; }
.sec { padding: 0 8px 8px 30px; height: 131px; }
.sec h3 { height: 40px; padding-top: 8px; font-size: 20px; line-height: 28px; color: #16288c; display: flex; }
.tw { width: 30px; margin-left: -30px; flex: none; display: flex; justify-content: center; align-items: center; }
.tw svg { width: 8px; height: 14px; margin-right: 6px; }
.tw svg.wide { width: 12px; height: 8px; }
.thumb { width: 100%; height: 83px; background: #0ce6ff; border: 1px solid #74c4f8; }
.thumb.short { height: 69px; }
.tl { fill: none; stroke: #2a78dc; stroke-width: 1; vector-effect: non-scaling-stroke; }
.sec-system { height: 88px; background: #a3b7d9; }
.sec-computation { background: #e2a2a2; }
.sec-storage { background: #a4c3a2; }
.sec-memory { background: #a2a2e2; }
.sec-video { background: #e2cba2; height: 275px; }
.sec-power { background: #e2e2a2; }
.graph-name { display: flex; font-size: 17px; height: 44px; padding: 16px 6px 4px 0; white-space: nowrap; }
.preset-name { margin-left: auto; font-size: 15px; }
.explorer-foot { height: 39px; display: flex; padding: 0 37px 1px 5px; gap: 3px; }
.explorer-foot .ruler { flex: 1; }
.fit { width: 24px; height: 24px; margin-top: 2px; background: #b4d0f8; border: 2px solid #667; }
.fit svg { width: 20px; height: 18px; }

/* Scroll bars */
.scroll { width: 26px; flex: none; background: #cdcdcd; display: flex; flex-direction: column; }
.scroll button { height: 26px; background: #f0f0f0; display: flex; justify-content: center; align-items: center; }
.scroll button:last-child { margin-top: auto; }
.scroll svg { width: 14px; height: 14px; }
.scroll .tall { height: 87px; align-items: flex-start; padding-top: 7px; }
.scroll .outer-up { height: 34px; }
.scroll .gap { height: 31px; background: #dadada; }
.scroll .thumb-down { height: 86px; align-items: flex-end; padding-bottom: 5px; }
.scroll .mid { height: 95px; }

.main-split { flex: 0 0 9px; background: #cdcdcd; border-left: 1px solid #999; }

/* Workspace */
.workspace { flex: 1; min-width: 0; display: flex; flex-direction: column; }
.tabs { height: 48px; display: flex; padding: 4px 4px 0; border-bottom: 1px solid #888; }
.tab { width: 268px; background: #fff; border-top: 6px solid #1f74e0; border-right: 3px solid #999; display: flex; align-items: center; gap: 4px; padding: 2px 0 0 9px; }
.tab-new { width: 36px; background: #efefef; border: 1px solid #aaa; border-left: 0; }
.tab-menu { margin-left: auto; }
.tab-menu svg { width: 12px; height: 12px; }
.work { flex: 1; display: flex; background: #bfbfbf; min-height: 0; }
.work > .scroll { width: 27px; }
.panels { flex: 1; min-width: 0; overflow: hidden; display: flex; flex-direction: column; gap: 5px; padding-bottom: 23px; }
.panel { border: 3px solid #727272; background: #0ff; display: flex; flex-direction: column; }
.panel-gpu { margin-top: -12px; flex: 1; }
.panel-cpu { height: 595px; }
.panel-head { height: 32px; display: flex; align-items: center; padding: 2px 0 0 14px; white-space: nowrap; }
.panel-gpu .panel-head { background: #b9d6fd; border-bottom: 2px solid #7aa8d8; }
.panel-cpu .panel-head { background: #edb8b8; }
.corner { width: 11px; height: 10px; margin-right: 5px; }
.preset { margin-left: 13px; display: flex; align-items: center; gap: 6px; }
.preset svg { width: 12px; height: 9px; }
.tool { margin-left: 22px; }
.tool svg { width: 18px; height: 20px; }
.tool + .tool { margin-left: 20px; }
.tool.gear svg { width: 22px; height: 22px; }
.tool + .tool.gear { margin-left: 16px; }
.spacer { flex: 1; }
.view { width: 30px; height: 27px; display: flex; align-items: center; justify-content: center; }
.view.on { width: 27px; background: #9c9ca2; border: 2px solid #77777c; border-radius: 3px; }
.view svg { width: 18px; height: 20px; }

.chart-area { display: flex; height: 249px; }
.series { width: 300px; overflow: hidden; display: flex; align-items: flex-start; }
.series .scroll { height: 249px; }
.v-split { width: 8px; background: #d2d2d2; }
.h-split { height: 8px; background: #d2d2d2; flex: none; }

/* Chart frame: axis | plot | right margin */
.chart { flex: 1; display: grid; grid-template: 26px 187px 34px / 120px 1fr 27px; }
.chart-title { grid-column: 1 / 3; text-align: center; font-size: 14px; line-height: 26px; }
.axis { grid-column: 1; position: relative; border-right: 2px solid #111; }
.axis svg { position: absolute; right: 0; top: 0; overflow: visible; }
.axis span { position: absolute; right: 20px; transform: translateY(-50%); line-height: 20px; }
.plot { grid-column: 2; position: relative; border-bottom: 2px solid #111; border-right: 1px solid #2a90e0; background: #10e2ff; }
.plot.cpu { background: #0ce8ff; }
.plot > svg { width: 100%; height: 100%; }
.cursor { position: absolute; left: 39.7%; top: 0; bottom: 0; width: 2px; background: #0a3c4a; }
.chevron { grid-column: 1; justify-self: end; margin: 8px 5px 0 0; width: 17px; height: 20px; background: #9cc4ec; border: 2px solid #345; }
.chevron svg { width: 13px; height: 16px; }
.bluef { fill: #1a35d8; }
.tealf { fill: #4f9c94; }
.pinkf { fill: #8ca5d4; }
.hatchf { fill: url(#hatch); }
.cpu path { fill: none; stroke-width: 1; vector-effect: non-scaling-stroke; }
.l-teal { stroke: #08a8ba; }
.l-mint { stroke: #08d2c0; }
.l-green { stroke: #0a9840; }
.l-blue { stroke: #1028c0; }
.l-mag { stroke: #8c3098; }
.l-org { stroke: #a08850; }

.ruler { position: relative; background: #3399ff; height: 34px; }
.ruler.framed { height: 38px; border-top: 2px solid #fff; }
.ruler svg { width: 100%; height: 18px; }
.ruler span { position: absolute; bottom: -2px; transform: translateX(-50%); color: #fff; font-size: 13px; line-height: 18px; }
.ruler span.first { transform: none; }
.ruler span.end { transform: translateX(-100%); }
.ruler .mark { position: absolute; left: 39.7%; top: 0; width: 2px; height: 9px; background: #000; }
.ruler .now { bottom: 1px; background: #0ff; border: 2px solid #000; color: #111; padding: 2px 4px; }

.tooltip { position: absolute; z-index: 2; left: 41%; top: 187px; width: 295px; height: 182px; background: #f1f2f7; border: 2px solid #767676; padding: 3px 8px 0; font-size: 16px; text-align: center; white-space: nowrap; }
.tooltip dl { display: grid; grid-template-columns: auto 1fr; line-height: 40px; text-align: left; margin-bottom: 4px; }
.tooltip dt { font-size: 19px; }
.tooltip dd { font-size: 21px; text-align: right; color: #8c1c30; }
.tooltip .t-blue { color: #2a1cc8; }

/* Data tables */
.table-area { flex: 1; min-height: 0; overflow: hidden; display: flex; align-items: flex-start; }
.table-area .scroll { align-self: stretch; }
.grid { width: 100%; flex: 1; min-width: 0; table-layout: fixed; border-collapse: separate; border-spacing: 0; }
.grid th { height: 31px; padding: 4px 4px 0; text-align: left; font-weight: 400; line-height: 24px; white-space: nowrap; overflow: hidden; background: linear-gradient(#fff 40%, #f0f1f4); border-right: 1px solid #dcdfe6; border-bottom: 1px solid #aaa; vertical-align: middle; }
.grid th div { display: flex; position: relative; }
.grid sub { margin-left: auto; align-self: flex-end; font-size: 13px; line-height: 16px; }
.grid sup { position: absolute; right: 0; top: -4px; font-size: 12px; line-height: 14px; }
.grid .sort { background: linear-gradient(#f2fafe, #d8eefa); border-right-color: #98ccec; position: relative; }
.sort::before { content: ""; position: absolute; left: 50%; top: 1px; border: 6px solid transparent; border-top: 0; border-bottom: 6px solid #7c98ac; }
.sort.desc::before { border-bottom: 0; border-top: 6px solid #5c88a8; }
.grid td { height: 29px; padding: 3px 4px 0 0; line-height: 22px; background: #0ce6ff; border-right: 1px solid #5cc8f0; border-bottom: 1px solid #48ccf4; white-space: nowrap; overflow: hidden; vertical-align: middle; }
.grid tr:nth-child(4n) td { height: 28px; }
.grid td.n { background: #adc7e3; text-align: right; }
.side td, .grid td.k { background: #adc7e3; border-bottom-color: #9cb8dc; border-right-color: #c0c8dc; }
.grid.side td { background-color: #adc7e3; }
.num { text-align: right; }
.grid td.leaf { padding-left: 28px; }
.exp { display: inline-block; width: 8px; height: 14px; margin: 0 8px 0 12px; vertical-align: 0; }
.g { color: #0c7a40; }
.r { color: #a01c3c; }
.s { color: #2c8098; }
.k { color: #d01030; }
.grid .hot td { background: #14daff; }
.grid .hot td.n, .grid.side .hot td, .grid .hot td.k { background: #a0c0e6; }
.grid .sel td { background: #2ea6ff; color: #f4faff; }
.grid .sel td.n, .grid.side .sel td, .grid .sel td.k { background: #4a9ffa; }
.grid .idle td { background: #22b4ff; color: #f0f8ff; }
.grid .idle td.n, .grid.side .idle td, .grid .idle td.k { background: #66a8f4; }
.grid .focus td { border-top: 2px dashed #101c38; border-bottom: 2px dashed #101c38; }
.grid .last td { border-bottom: 2px solid #2a90e8; }
.grid th.gold, .grid tr td.gold { background: #fc0; border: 0; padding: 0; }
.grid th.freeze, .grid tr td.freeze { background: #a8d8e4; border: 0; padding: 0; }
.sw { display: block; width: 36px; height: 17px; margin-left: 3px; border: 3px solid; }
.grid td .sw { margin-top: -3px; }
.c-ff { background: #18b010; border-color: #d0209c; }
.c-unk { background: #1c36d8; border-color: #1c36d8; }
.c-csr { background: #5a18cc; border-color: #b818b8; }
.c-dwm { background: #088040; border-color: #981030; }
.c-idle { background: none; border: 2px solid #b0208c; }
.c-sys { background: #08982c; border-color: #08982c; }
.c-lat { background: #101cb0; border-color: #101cb0; }
.c-egui { background: #d0182c; border-color: #d0182c; }
.c-teal { background: #10a8ac; border-color: #10a8ac; }
.c-mint { background: #18d0a0; border-color: #18d0a0; }
.c-navy { background: #002c64; border-color: #002c64; }
.c-plum { background: #600044; border-color: #600044; }
.c-rose { background: #c81844; border-color: #c81844; }
.c-rust { background: #a06830; border-color: #a06830; }
.w8 { width: 8px; } .w45 { width: 45px; } .w68 { width: 68px; } .w75 { width: 75px; } .w78 { width: 78px; }
.w90 { width: 90px; } .w114 { width: 114px; } .w120 { width: 120px; } .w134 { width: 134px; } .w135 { width: 135px; }
.w149 { width: 149px; } .w150 { width: 150px; } .w172 { width: 172px; } .w195 { width: 195px; } .w196 { width: 196px; }
.w211 { width: 211px; } .w221 { width: 221px; } .w224 { width: 224px; } .w300 { width: 300px; } .w711 { width: 711px; }

/* Timeline footer */
.timeline { height: 71px; display: grid; grid-template-columns: 431px 1fr 57px; }
.range { display: grid; grid-template-columns: 295px 1fr; grid-auto-rows: 24px; column-gap: 6px; line-height: 24px; font-size: 16px; }
.range dt { text-align: right; }
.range dd { font: 15px/22px "Liberation Mono", monospace; width: 117px; text-align: right; }
.time-track { display: flex; flex-direction: column; gap: 4px; }
.h-scroll { height: 26px; background: #efefef; display: flex; align-items: center; }
.h-scroll button { width: 26px; display: flex; justify-content: center; }
.h-scroll svg { width: 14px; height: 14px; }
.h-scroll i { height: 26px; background: #cdcdcd; margin-right: auto; }

.rail { flex: 0 0 42px; display: flex; flex-direction: column; align-items: flex-start; gap: 8px; padding: 2px 0 0 4px; color: #10288c; }
.rail button { width: 33px; border: 2px solid #6cb4b4; writing-mode: vertical-rl; padding: 2px 0; line-height: 28px; font-size: 17px; }
```
FILE: charts.js
```js
// Visible time range of the trace, in seconds.
const START = 18.45087768, END = 18.653256701, CURSOR = 18.531267124;
const pct = t => (t - START) / (END - START) * 100;

document.querySelectorAll('.ruler').forEach(el => {
  const step = +el.dataset.step, minor = +el.dataset.minor, digits = +el.dataset.digits;
  let lines = '', labels = '';
  for (let i = Math.ceil(START / minor); i * minor < END; i++) {
    const major = Math.abs(i * minor / step - Math.round(i * minor / step)) < 1e-6;
    lines += `<line x1="${pct(i * minor)}%" x2="${pct(i * minor)}%" y1="0" y2="${major ? 17 : 8}" stroke="${major ? '#fff' : '#9cd8ff'}" stroke-width="${major ? 2 : 1}"/>`;
  }
  for (let i = Math.floor(START / step + 1e-6); i * step < END; i++) {
    // The label under the cursor box is left out.
    if (el.dataset.cursor && Math.abs(i * step - CURSOR) < step / 2) continue;
    const p = Math.max(0, pct(i * step));
    const cls = p === 0 ? 'first' : p > 98.2 ? 'end' : '';
    labels += `<span class="${cls}" style="left:${cls === 'end' ? 100 : p}%">${(i * step).toFixed(digits)}</span>`;
  }
  if (el.dataset.cursor) labels += `<i class="mark"></i><span class="now" style="left:${pct(CURSOR)}%">${CURSOR.toFixed(9)}s</span>`;
  el.innerHTML = `<svg>${lines}</svg>${labels}`;
});

document.querySelectorAll('.axis').forEach(el => {
  const max = +el.dataset.max, minor = +el.dataset.minor, major = +el.dataset.major;
  let lines = '', labels = '';
  for (let i = 0; i * minor <= max; i++) {
    const v = i * minor, y = 186 - v / max * 187, big = v % major === 0;
    lines += `<line x1="${big ? 0 : 5}" x2="18" y1="${y}" y2="${y}" stroke="#123" stroke-width="${big ? 2 : 1}"/>`;
    if (big) labels += `<span style="top:${y + 1}px">${v}</span>`;
  }
  el.innerHTML = `<svg width="18" height="187">${lines}</svg>${labels}`;
});
```
